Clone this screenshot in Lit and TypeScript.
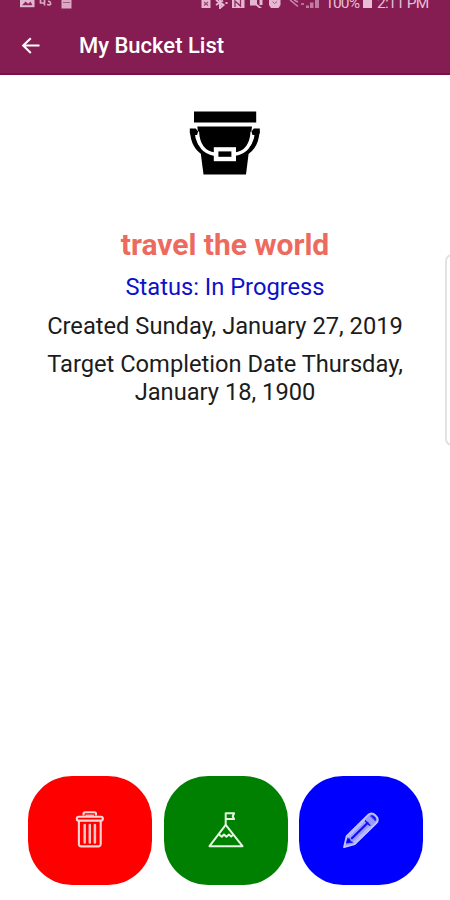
import { LitElement, html, css, svg } from "lit";
import { customElement } from "lit/decorators.js";

const trashIcon = svg`
  <svg viewBox="0 0 30 38" width="30" height="38" fill="none" stroke="#ffd6d6" stroke-width="2.1" stroke-linejoin="round">
    <path d="M8.5 4.5V2.8a1.6 1.6 0 0 1 1.600-1.600h9.300a1.600 1.600 0 0 1 1.600 1.600v1.700"/>
    <path d="M10.500 4.300h8.500" stroke-width="1.500" stroke="#ffb0b0"/>
    <rect x="1.800" y="5.800" width="26" height="3.800" rx="1.800"/>
    <path d="M3.900 10v23a2.400 2.400 0 0 0 2.400 2.400h17a2.400 2.400 0 0 0 2.400-2.400V10"/>
    <path d="M9.700 14v17.500M14.800 14v17.500M19.900 14v17.500" stroke-width="2.500" stroke="#ffc4c4" stroke-linecap="round"/>
  </svg>`;

const mountainIcon = svg`
  <svg viewBox="0 0 36 38" width="36" height="38" fill="none" stroke="#e6f5e0" stroke-width="2" stroke-linejoin="round" stroke-linecap="round">
    <path d="M17.700 13.800V2.300h8.400l-1.400 2.900 1.400 2.900h-8.400"/>
    <path d="M17.700 13.800L1.500 35.200h33z"/>
    <path d="M10.800 23.400l3 2.400 2.200-2.300 2.400 2.300 2.600-2.300 2.200 2.100 1.900-2"/>
  </svg>`;

const pencilIcon = svg`
  <svg viewBox="0 0 38 38" width="38" height="38" fill="none" stroke-linejoin="round" stroke-linecap="round">
    <path d="M2 36.200l2.600-11L26.400 3.600a4.400 4.400 0 0 1 6.200 0l2 2a4.400 4.400 0 0 1 0 6.200L12.800 33.200z" fill="#9c9cff" stroke="#c6c6ff" stroke-width="1.700"/>
    <path d="M5.500 27.500L4.300 32.200 10.600 31.200 8.600 30.400 7.600 28z" fill="#00f" stroke="#00f" stroke-width=".6"/>
    <path d="M10 27.300L25.500 12" stroke="#1010ff" stroke-width="2.300"/>
    <path d="M23.200 9.800l5 5" stroke="#1010ff" stroke-width="1.500"/>
    <path d="M28.800 4.800a2.500 2.500 0 0 1 3 .4l1.300 1.300a2.500 2.500 0 0 1 .3 3.100z" fill="#1010ff" stroke="#1010ff" stroke-width=".7"/>
    <path d="M6.500 25.600L22.600 9.600M12.200 31L28.500 15" stroke="#c9c9ff" stroke-width="1.200" stroke-dasharray="1 1.400"/>
  </svg>`;

const bucketIcon = svg`
  <svg viewBox="0 0 72 66" width="72" height="66">
    <path d="M5 .6h62.200v10.800H5z"/>
    <path d="M8.300 15.500h54.700L57 63.400H14.500z"/>
    <path d="M3.300 20C3.800 31 7.500 38 15.500 42.500M68.300 20C67.800 31 64.100 38 56.100 42.500" fill="none" stroke="#000" stroke-width="4.600"/>
    <path d="M8.300 20.500C9 33.500 14 41.700 26 43.200M63.300 20.500C62.600 33.500 57.600 41.700 45.600 43.200" fill="none" stroke="#fff" stroke-width="3.500"/>
    <path d="M.8 17.600h6l2.300 3-1 3.500H2L.8 22zM70.800 17.600h-6l-2.300 3 1 3.500h6.100l1.200-2.100z"/>
    <path d="M24.800 36.200h22.200v14H24.800z" fill="#fff"/>
    <path d="M29.400 40.400h13v5.400h-13z"/>
  </svg>`;

const noticesIcon = svg`
  <svg viewBox="0 0 54 9" width="54" height="9">
    <path d="M0 0h14.500v7.200H0z" fill="#e3b8d0"/>
    <path d="M2 5.200l3.500-3.700 2.800 2.300L10.500 1.500l2 3.700z" fill="#8d2a5f"/>
    <path d="M20.500 0v3h4M24.500 0v5.500M27 4.500q4 1.200 3.600-1.200T28 1.500" fill="none" stroke="#dca9c5" stroke-width="1.700"/>
    <path d="M41.500 0h10v8.500h-10z" fill="#dca9c5"/>
    <path d="M43 2.500h7" stroke="#a85a86"/>
  </svg>`;

const systemIcon = svg`
  <svg viewBox="0 0 120 9" width="120" height="9" fill="#e3b8d0">
    <path d="M1.500 0h9v8h-9z"/>
    <path d="M4 2l4 3.500M8 2L4 5.500" stroke="#9c4476" stroke-width="1.200"/>
    <path d="M16 5l7-4.500M16 0l7 5M20 0v8l3.500-3L20 2M26.500 2v2" fill="none" stroke="#e3b8d0" stroke-width="2"/>
    <path d="M32 0h12.500v8H32z"/>
    <path d="M35 7V1l5.500 5V0" stroke="#8d2a5f" stroke-width="1.300" fill="none"/>
    <path d="M50 0h7v4l5 4h-3l-3-2.500h-6zM59.500 0h3v5h-3z"/>
    <path d="M69 0h11.500v5l-2 3H71l-2-3z"/>
    <path d="M72.500 1.500l2 2 2.500-2" fill="none" stroke="#a85a86"/>
    <path d="M90 0l8 6.500M94 0l4 2M101 4h3" fill="none" stroke="#c888aa" stroke-width="1.600"/>
    <path d="M106 5.500h3V8h-3zM110 2.500h3.500V8H110zM115 0h4v8h-4z" fill="#c07ba0"/>
  </svg>`;

@customElement("app-root")
export class AppRoot extends LitElement {
  static styles = css`
    :host {
      display: flex;
      flex-direction: column;
      position: relative;
      height: 900px;
      overflow: hidden;
      background: #fff;
      color: #1c1c1c;
      font-family: Roboto, "Liberation Sans", sans-serif;
    }
    svg { display: block; flex: none; }
    header {
      box-sizing: border-box;
      height: 75px;
      background: #851d52;
      border-bottom: 2px solid #7b0d47;
    }
    .status {
      display: flex;
      height: 16px;
      padding: 0 20px;
      color: #e6bfd4;
      font-size: 15.5px;
      line-height: 16px;
      letter-spacing: -0.8px;
    }
    .system { margin-left: 126px; }
    .percent { margin-left: 5px; margin-top: -5px; width: 35px; white-space: nowrap; }
    .battery { width: 9px; height: 8px; margin-left: 3px; background: #e6bfd4; }
    .clock { margin-left: 5px; margin-top: -5px; white-space: nowrap; }
    .bar {
      display: flex;
      align-items: center;
      height: 60px;
      padding-left: 21px;
    }
    .title {
      margin: 0 0 0 39px;
      color: #fff;
      font-size: 22px;
      font-weight: 500;
      line-height: 28px;
    }
    main {
      flex: 1;
      display: flex;
      flex-direction: column;
      align-items: center;
      padding-top: 36px;
      text-align: center;
    }
    .goal {
      margin: 50px 0 0;
      color: #ed6a5e;
      font-size: 30px;
      line-height: 36px;
      font-weight: 700;
    }
    .line { margin: 10.6px 0 0; font-size: 23.7px; line-height: 28px; }
    .progress { margin-top: 10px; color: #1010c8; }
    .actions {
      display: flex;
      gap: 11.5px;
      padding: 0 27px 15.5px 28px;
    }
    .action {
      flex: 1;
      display: flex;
      align-items: center;
      justify-content: center;
      height: 108.5px;
      padding: 0;
      border: 0;
      border-radius: 44px;
    }
    .delete { background: #f00; }
    .complete { background: #008000; }
    .edit { background: #00f; }
    .edge {
      position: absolute;
      top: 254px;
      right: -9px;
      width: 10px;
      height: 188px;
      border: 2px solid #e2e2e2;
      border-radius: 7px;
    }
  `;

  render() {
    return html`
      <header>
        <div class="status">
          ${noticesIcon}
          <span class="system">${systemIcon}</span>
          <span class="percent">100%</span>
          <span class="battery"></span>
          <span class="clock">2:11 PM</span>
        </div>
        <div class="bar">
          <svg viewBox="0 0 19 18" width="19" height="18" fill="none" stroke="#fff" stroke-width="2.1">
            <path d="M18.500 8.500H2M9.800 1.200L2.200 8.500l7.600 7.500"/>
          </svg>
          <h1 class="title">My Bucket List</h1>
        </div>
      </header>
      <main>
        ${bucketIcon}
        <h2 class="goal">travel the world</h2>
        <p class="line progress">Status: In Progress</p>
        <p class="line">Created Sunday, January 27, 2019</p>
        <p class="line">Target Completion Date Thursday,<br />January 18, 1900</p>
      </main>
      <div class="actions">
        <button class="action delete" aria-label="Delete">${trashIcon}</button>
        <button class="action complete" aria-label="Complete">${mountainIcon}</button>
        <button class="action edit" aria-label="Edit">${pencilIcon}</button>
      </div>
      <div class="edge"></div>
    `;
  }
}
